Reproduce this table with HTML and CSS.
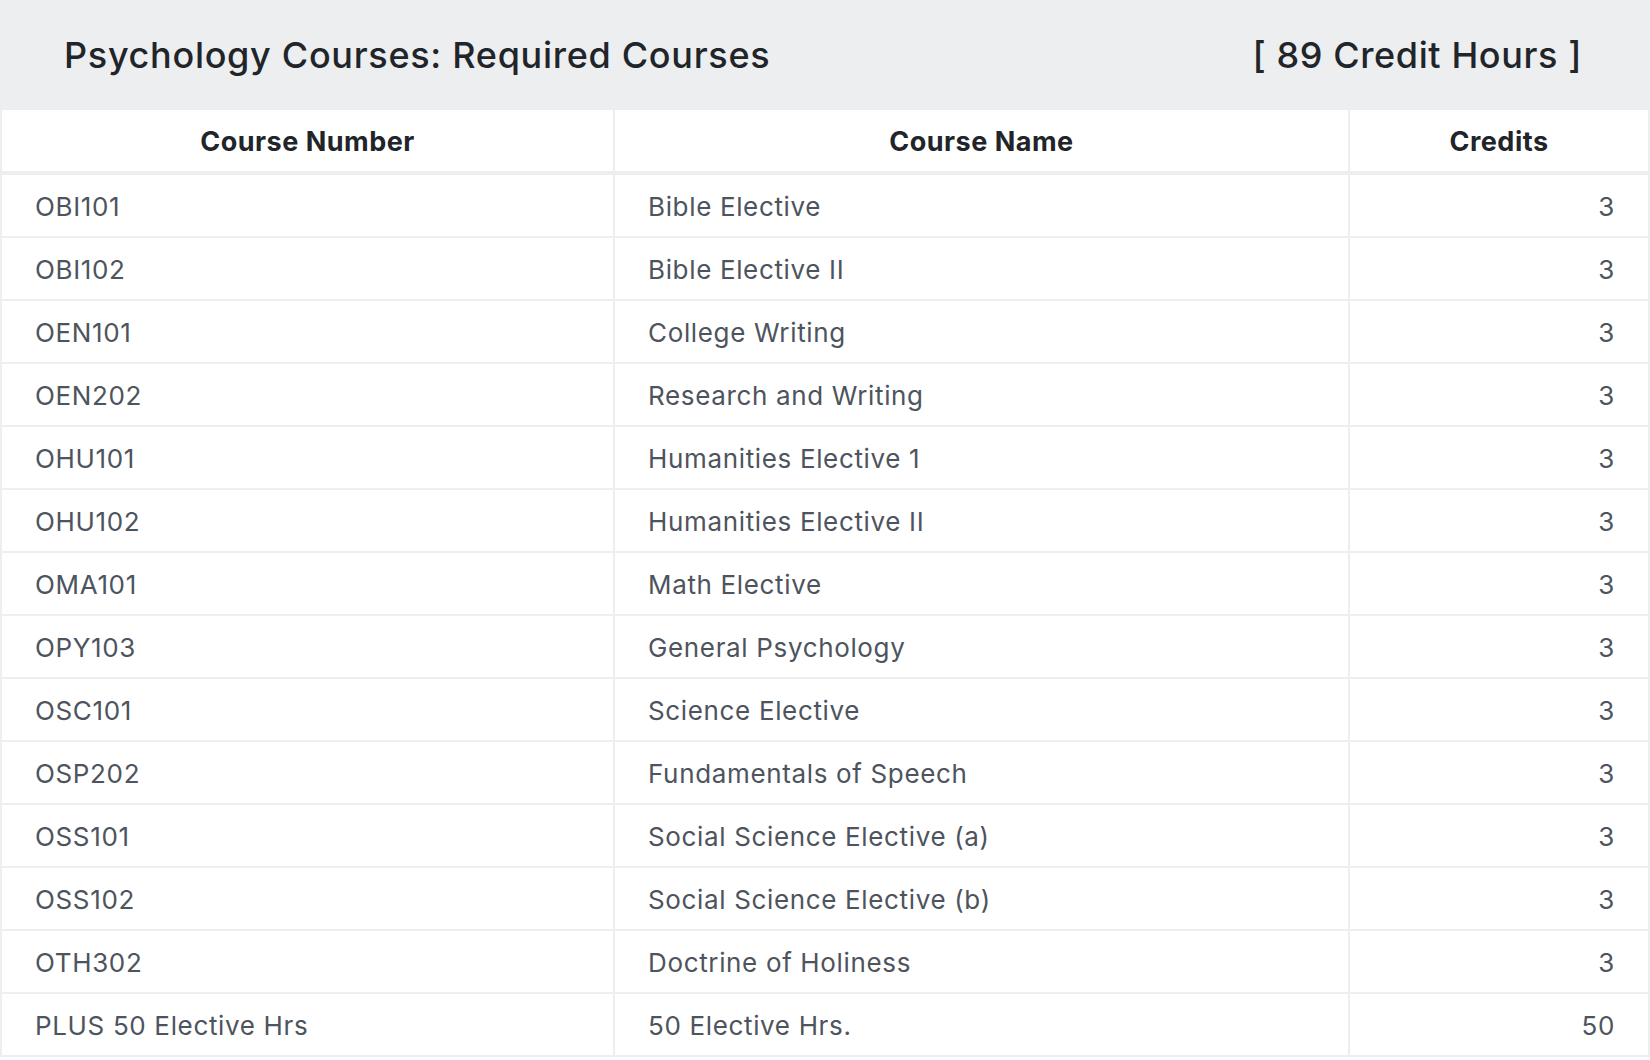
FILE: index.html
```html
<!DOCTYPE html>
<html>
<head>
<meta charset="utf-8">
<link rel="stylesheet" href="styles.css">
</head>
<body>
<div class="panel">
  <div class="panel-head">
    <h2 class="panel-title">Psychology Courses: Required Courses</h2>
    <span class="panel-hours">[ 89 Credit Hours ]</span>
  </div>
  <table class="courses">
    <colgroup>
      <col class="c-num">
      <col class="c-name">
      <col class="c-cred">
    </colgroup>
    <thead>
      <tr><th>Course Number</th><th>Course Name</th><th>Credits</th></tr>
    </thead>
    <tbody>
      <tr><td>OBI101</td><td>Bible Elective</td><td class="num">3</td></tr>
      <tr><td>OBI102</td><td>Bible Elective II</td><td class="num">3</td></tr>
      <tr><td>OEN101</td><td>College Writing</td><td class="num">3</td></tr>
      <tr><td>OEN202</td><td>Research and Writing</td><td class="num">3</td></tr>
      <tr><td>OHU101</td><td>Humanities Elective 1</td><td class="num">3</td></tr>
      <tr><td>OHU102</td><td>Humanities Elective II</td><td class="num">3</td></tr>
      <tr><td>OMA101</td><td>Math Elective</td><td class="num">3</td></tr>
      <tr><td>OPY103</td><td>General Psychology</td><td class="num">3</td></tr>
      <tr><td>OSC101</td><td>Science Elective</td><td class="num">3</td></tr>
      <tr><td>OSP202</td><td>Fundamentals of Speech</td><td class="num">3</td></tr>
      <tr><td>OSS101</td><td>Social Science Elective (a)</td><td class="num">3</td></tr>
      <tr><td>OSS102</td><td>Social Science Elective (b)</td><td class="num">3</td></tr>
      <tr><td>OTH302</td><td>Doctrine of Holiness</td><td class="num">3</td></tr>
      <tr><td>PLUS 50 Elective Hrs</td><td>50 Elective Hrs.</td><td class="num">50</td></tr>
    </tbody>
  </table>
</div>
</body>
</html>
```

FILE: styles.css
```css
html, body {
  margin: 0;
  padding: 0;
  background: #ffffff;
}
body {
  font-family: Inter, "Noto Sans", "Liberation Sans", sans-serif;
}
.panel-head {
  height: 110px;
  background: #edeef0;
  display: flex;
  align-items: center;
  justify-content: space-between;
  padding: 0 68px 0 64px;
  color: #212529;
}
.panel-title {
  margin: 0;
  font-size: 36px;
  font-weight: 500;
  letter-spacing: 0.7px;
}
.panel-hours {
  font-size: 36px;
  font-weight: 500;
  letter-spacing: 0.6px;
}
.courses {
  width: 100%;
  table-layout: fixed;
  border-collapse: separate;
  border-spacing: 0;
}
.c-num { width: 615px; }
.c-name { width: 735px; }
.c-cred { width: 300px; }
.courses th,
.courses td {
  border-right: 2px solid #eceef0;
  border-bottom: 2px solid #eceef0;
  white-space: nowrap;
}
.courses th:first-child,
.courses td:first-child {
  border-left: 2px solid #eceef0;
}
.courses th {
  height: 59px;
  line-height: 59px;
  padding: 2px 33px 0;
  border-bottom-width: 4px;
  font-size: 27px;
  font-weight: 700;
  letter-spacing: 0.5px;
  color: #212529;
  text-align: center;
}
.courses td {
  height: 59px;
  line-height: 59px;
  padding: 2px 33px 0;
  font-size: 26px;
  letter-spacing: 0.65px;
  color: #4d545d;
  text-align: left;
}
.courses td.num {
  text-align: right;
}
```
